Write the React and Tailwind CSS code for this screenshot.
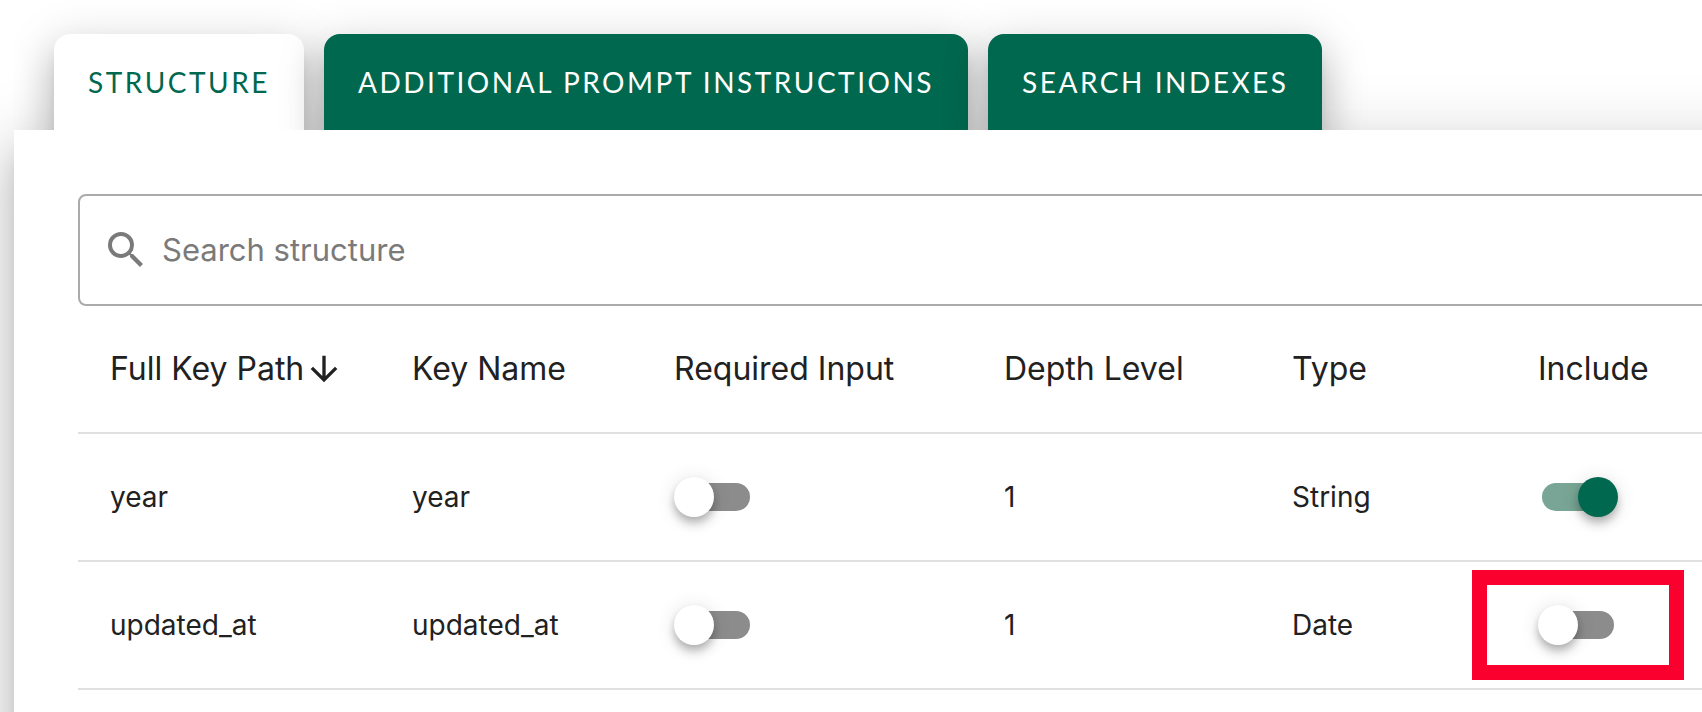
import React, { useState } from 'react';

const TABS = ['Structure', 'Additional Prompt Instructions', 'Search Indexes'];

const ROWS = [
  { path: 'year', name: 'year', required: false, depth: 1, type: 'String', include: true },
  { path: 'updated_at', name: 'updated_at', required: false, depth: 1, type: 'Date', include: false, highlighted: true },
];

const Switch = ({ label, defaultChecked }) => (
  <input
    type="checkbox"
    role="switch"
    aria-label={label}
    defaultChecked={defaultChecked}
    className="relative block h-10 w-20 cursor-pointer appearance-none before:absolute before:inset-x-1 before:inset-y-1.5 before:rounded-full before:bg-[#8c8c8c] after:absolute after:top-0 after:left-0 after:size-10 after:rounded-full after:bg-white after:shadow-[0_4px_8px_-2px_rgba(0,0,0,0.2),0_8px_10px_0_rgba(0,0,0,0.14),0_2px_20px_0_rgba(0,0,0,0.12)] checked:before:bg-[#78a595] checked:after:left-10 checked:after:bg-[#00684e]"
  />
);

const App = () => {
  const [activeTab, setActiveTab] = useState('Structure');
  const [search, setSearch] = useState('');

  const rows = ROWS.filter((row) => row.path.includes(search.toLowerCase()));

  return (
    <div className="flex min-h-screen flex-col overflow-hidden bg-white pl-3.5 font-[Inter,sans-serif] text-[#212121]">
      {/* Tabs */}
      <div role="tablist" className="relative z-10 flex gap-5 overflow-hidden pt-[34px] pl-10 font-[Lato,sans-serif]">
        {TABS.map((tab) => (
          <button
            key={tab}
            type="button"
            role="tab"
            aria-selected={tab === activeTab}
            onClick={() => setActiveTab(tab)}
            className={`h-24 shrink-0 rounded-t-2xl px-[34px] text-[28px] tracking-[0.09em] whitespace-nowrap uppercase shadow-[0_14px_16px_-8px_rgba(0,0,0,0.2),0_24px_34px_4px_rgba(0,0,0,0.14),0_10px_44px_8px_rgba(0,0,0,0.12)] ${
              tab === activeTab ? 'bg-white text-[#00684e]' : 'bg-[#00684e] text-white'
            }`}
          >
            {tab}
          </button>
        ))}
      </div>

      {/* Panel, runs past the right and bottom edges of the window */}
      <div
        role="tabpanel"
        className="-mr-24 -mb-24 grow bg-white pt-16 pl-16 shadow-[0_16px_20px_-10px_rgba(0,0,0,0.2),0_32px_48px_4px_rgba(0,0,0,0.14),0_12px_60px_10px_rgba(0,0,0,0.12)]"
      >
        <label className="flex h-28 items-center gap-3 rounded-lg border-2 border-[#aaaaaa] pl-[22px]">
          <svg className="size-12 shrink-0 text-[#7a7a7a]" viewBox="0 0 24 24" fill="currentColor" aria-hidden="true">
            <path d="M15.5 14h-.79l-.28-.27A6.471 6.471 0 0 0 16 9.5 6.5 6.5 0 1 0 9.5 16c1.61 0 3.09-.59 4.23-1.57l.27.28v.79l5 4.99L20.49 19l-4.99-5zm-6 0C7.01 14 5 11.99 5 9.5S7.01 5 9.5 5 14 7.01 14 9.5 11.99 14 9.5 14z" />
          </svg>
          <input
            type="text"
            aria-label="Search structure"
            placeholder="Search structure"
            value={search}
            onChange={(e) => setSearch(e.target.value)}
            className="min-w-0 grow text-[31px] outline-none placeholder:text-[#7a7a7a]"
          />
        </label>

        <table className="w-full table-fixed border-separate border-spacing-0 text-left">
          <colgroup>
            <col className="w-[302px]" />
            <col className="w-[262px]" />
            <col className="w-[330px]" />
            <col className="w-[288px]" />
            <col className="w-[246px]" />
            <col />
          </colgroup>
          <thead>
            <tr className="h-32 text-[32px] whitespace-nowrap [&>th]:border-b-2 [&>th]:border-[#e0e0e0] [&>th]:pl-8 [&>th]:font-normal">
              <th aria-sort="descending">
                <button type="button" className="flex items-center">
                  Full Key Path
                  <svg className="size-10 shrink-0" viewBox="0 0 24 24" fill="currentColor" aria-hidden="true">
                    <path d="M20 12l-1.41-1.41L13 16.17V4h-2v12.17l-5.58-5.59L4 12l8 8 8-8z" />
                  </svg>
                </button>
              </th>
              <th>Key Name</th>
              <th>Required Input</th>
              <th>Depth Level</th>
              <th>Type</th>
              <th>Include</th>
            </tr>
          </thead>
          <tbody>
            {rows.map((row) => (
              <tr key={row.path} className="h-32 text-[28px] [&>td]:border-b-2 [&>td]:border-[#e0e0e0] [&>td]:pl-8">
                <td>{row.path}</td>
                <td>{row.name}</td>
                <td>
                  <Switch label={`Require ${row.path}`} defaultChecked={row.required} />
                </td>
                <td>{row.depth}</td>
                <td>{row.type}</td>
                <td>
                  <div className="relative w-20">
                    <Switch label={`Include ${row.path}`} defaultChecked={row.include} />
                    {row.highlighted && (
                      <span className="pointer-events-none absolute -inset-x-[66px] -inset-y-[35px] border-[15px] border-[#f9002f]" />
                    )}
                  </div>
                </td>
              </tr>
            ))}
          </tbody>
        </table>
      </div>
    </div>
  );
};

export default App;
